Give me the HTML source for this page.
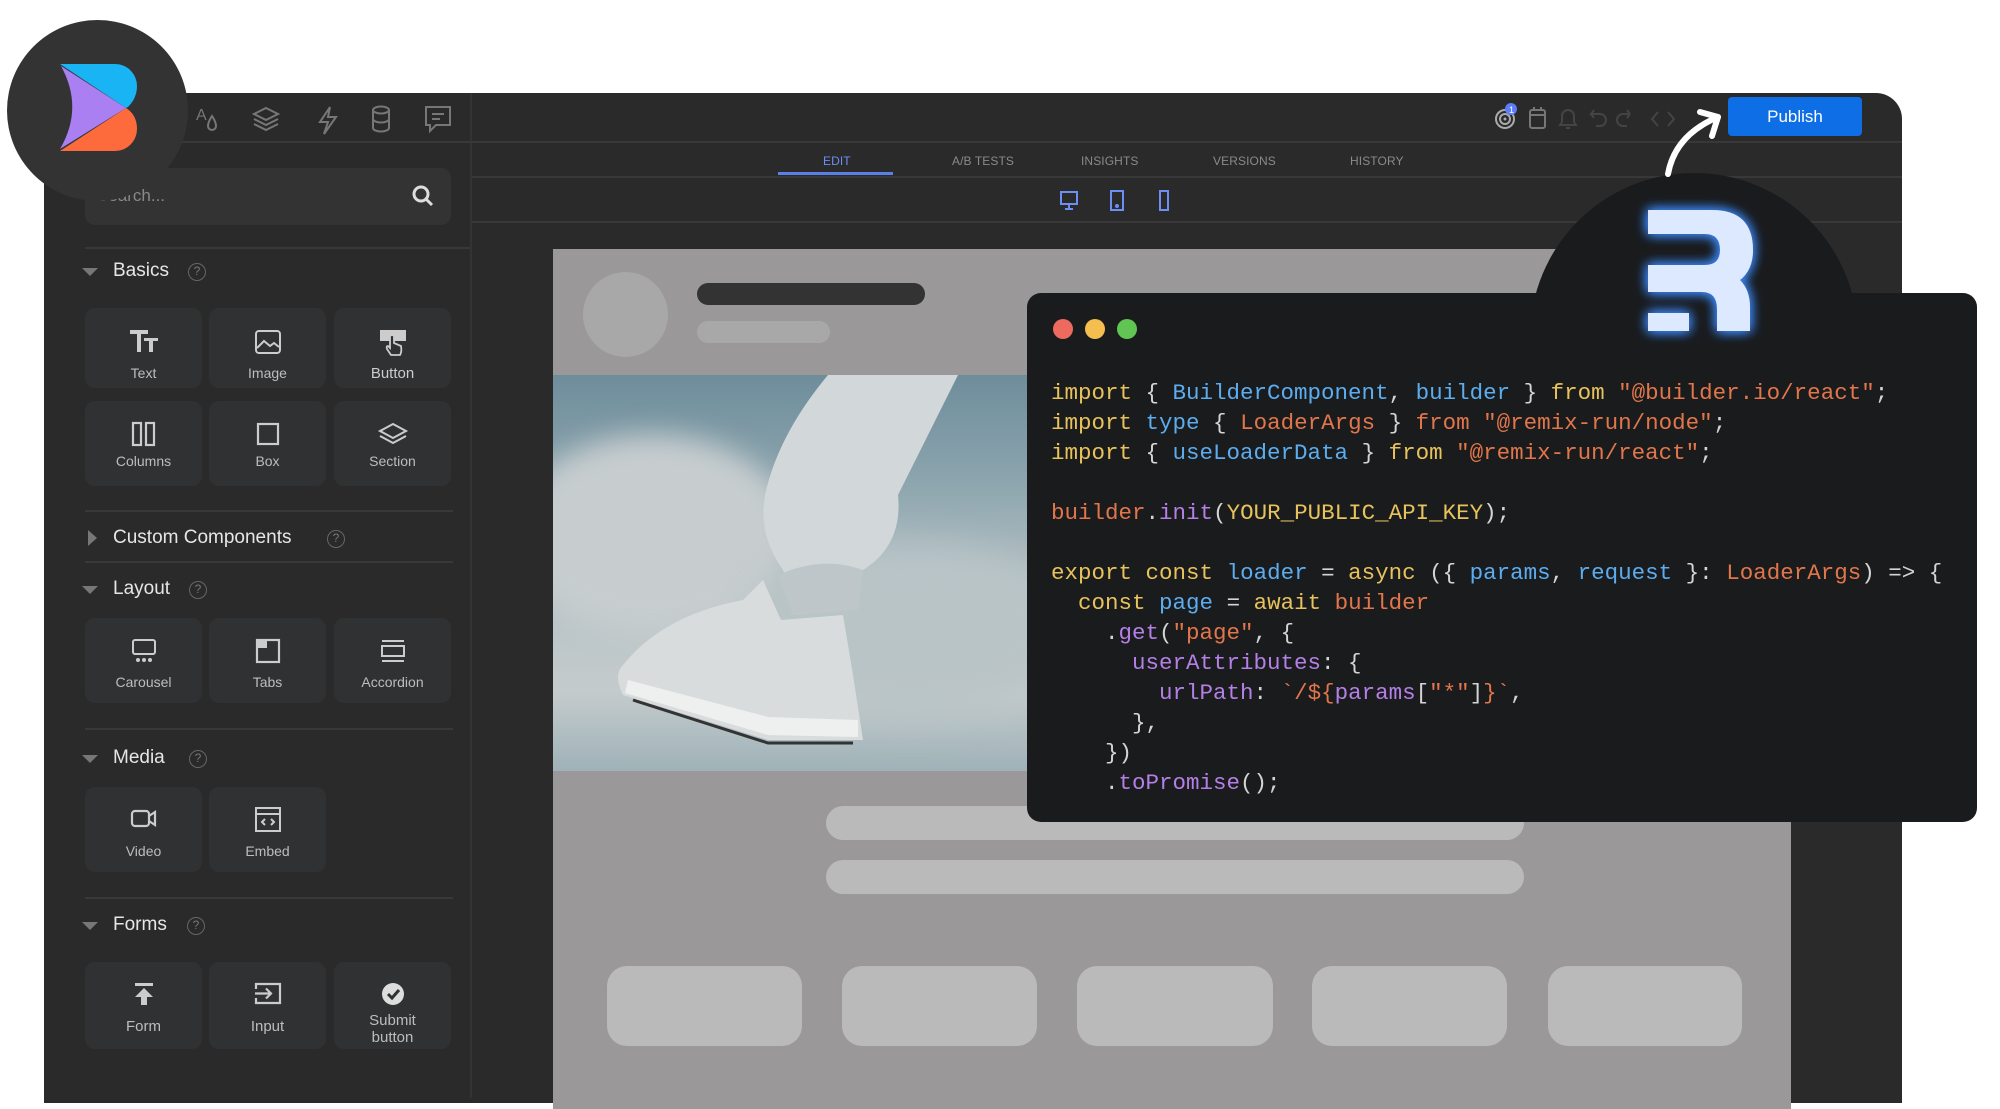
<!DOCTYPE html>
<html><head><meta charset="utf-8"><style>
*{margin:0;padding:0;box-sizing:border-box}
body{width:2000px;height:1098px;background:#fff;position:relative;overflow:hidden;font-family:"Liberation Sans",sans-serif}
.abs{position:absolute}
#panel{left:44px;top:93px;width:1858px;height:1010px;background:#2a2a2a;border-top-right-radius:26px;overflow:hidden}
.hl{position:absolute;height:2px;background:#383838}
.tile{position:absolute;width:117px;background:#303132;border-radius:10px;color:#bdbdbd;font-size:14px;text-align:center}
.tile svg{position:absolute;left:50%;transform:translateX(-50%)}
.tile span{position:absolute;left:0;right:0}
.sec{position:absolute;color:#e6e6e6;font-size:19px}
.tri{position:absolute;width:0;height:0;border-left:8px solid transparent;border-right:8px solid transparent;border-top:8px solid #777}
.q{position:absolute;width:18px;height:18px;border:1.5px solid #666;border-radius:50%;color:#777;font-size:12px;text-align:center;line-height:15px}
.tab{position:absolute;top:154px;font-size:12px;color:#8a8a8a;letter-spacing:.1px}
.code{position:absolute;left:1051px;top:378px;font-family:"Liberation Mono",monospace;font-size:22.5px;line-height:30px;color:#d4d4d4;white-space:pre}
.y{color:#e8c25a}.b{color:#5cadef}.o{color:#e2764a}.p{color:#b47fe6}
</style></head><body>

<div id="panel" class="abs"></div>
<div class="abs" style="left:470px;top:93px;width:2px;height:1005px;background:#333"></div>
<div class="hl" style="left:44px;top:141px;width:1858px"></div>
<div class="hl" style="left:472px;top:176px;width:1430px"></div>
<div class="hl" style="left:472px;top:221px;width:1430px"></div>

<svg class="abs" style="left:190px;top:100px" width="270" height="40" fill="none" stroke="#777" stroke-width="2">
<text x="6" y="20" fill="#777" stroke="none" font-size="16" font-family="Liberation Sans">A</text>
<path d="M22 16 Q18 22 18 26 A4 4 0 0 0 26 26 Q26 22 22 16Z"/>
<path d="M76 8 L88 14 L76 20 L64 14Z M64 19 L76 25 L88 19 M64 24 L76 30 L88 24"/>
<path d="M140 7 L130 22 H138 L134 34 L146 17 H138 Z"/>
<ellipse cx="191" cy="10" rx="8" ry="3.5"/><path d="M183 10 V28 A8 3.5 0 0 0 199 28 V10 M183 19 A8 3.5 0 0 0 199 19"/>
<path d="M236 7 H260 V25 H246 L240 31 V25 H236Z M242 14 H254 M242 19 H250"/>
</svg>

<div class="abs" style="left:85px;top:168px;width:366px;height:57px;background:#333;border-radius:10px"></div>
<div class="abs" style="left:97px;top:186px;color:#888;font-size:17px">Search...</div>
<svg class="abs" style="left:411px;top:184px" width="24" height="24" fill="none" stroke="#ddd" stroke-width="3"><circle cx="10" cy="10" r="7"/><path d="M15 15 L21 21"/></svg>
<div class="hl" style="left:85px;top:247px;width:385px"></div>

<div class="tri" style="left:82px;top:268px"></div>
<div class="sec" style="left:113px;top:260px">Basics</div>
<div class="q" style="left:188px;top:263px">?</div>
<div class="tile" style="left:85px;top:308px;height:80px"><svg style="top:20px" width="32" height="26"><path d="M2 2H20V6H13V24H9V6H2Z M16 10H30V13H25V24H21V13H16Z" fill="#ccc"/></svg><span style="top:57px">Text</span></div>
<div class="tile" style="left:209px;top:308px;height:80px"><svg style="top:21px" width="28" height="26" fill="none" stroke="#ccc" stroke-width="2"><rect x="2" y="2" width="24" height="22" rx="3"/><path d="M3 19 L10 12 L16 17 L20 14 L25 18"/></svg><span style="top:57px">Image</span></div>
<div class="tile" style="left:334px;top:308px;height:80px"><svg style="top:20px" width="30" height="30"><rect x="2" y="2" width="26" height="11" fill="#ccc"/><path d="M12 8 V20 L10 18 Q8 18 9 21 L13 27 H22 Q24 24 23 18 L16 15 V8 Q14 6 12 8Z" fill="#303132" stroke="#ccc" stroke-width="1.8"/></svg><span style="top:57px;color:#ccc;font-size:15px">Button</span></div>
<div class="tile" style="left:85px;top:401px;height:85px"><svg style="top:20px" width="26" height="26" fill="none" stroke="#ccc" stroke-width="2.2"><rect x="2" y="2" width="8" height="22"/><rect x="15" y="2" width="8" height="22"/></svg><span style="top:52px">Columns</span></div>
<div class="tile" style="left:209px;top:401px;height:85px"><svg style="top:21px" width="24" height="24" fill="none" stroke="#ccc" stroke-width="2.2"><rect x="2" y="2" width="20" height="20"/></svg><span style="top:52px">Box</span></div>
<div class="tile" style="left:334px;top:401px;height:85px"><svg style="top:21px" width="32" height="24" fill="none" stroke="#ccc" stroke-width="2"><path d="M16 2 L29 9 L16 16 L3 9Z M3 14 L16 21 L29 14"/></svg><span style="top:52px">Section</span></div>
<div class="hl" style="left:85px;top:510px;width:368px"></div>

<div class="abs" style="left:88px;top:530px;width:0;height:0;border-top:8px solid transparent;border-bottom:8px solid transparent;border-left:9px solid #777"></div>
<div class="sec" style="left:113px;top:527px">Custom Components</div>
<div class="q" style="left:327px;top:530px">?</div>
<div class="hl" style="left:85px;top:561px;width:368px"></div>

<div class="tri" style="left:82px;top:586px"></div>
<div class="sec" style="left:113px;top:578px">Layout</div>
<div class="q" style="left:189px;top:581px">?</div>
<div class="tile" style="left:85px;top:618px;height:85px"><svg style="top:20px" width="26" height="26" fill="none" stroke="#ccc" stroke-width="2"><rect x="2" y="2" width="22" height="14" rx="2"/><circle cx="7" cy="22" r="1" fill="#ccc"/><circle cx="13" cy="22" r="1" fill="#ccc"/><circle cx="19" cy="22" r="1" fill="#ccc"/></svg><span style="top:56px">Carousel</span></div>
<div class="tile" style="left:209px;top:618px;height:85px"><svg style="top:20px" width="26" height="26"><rect x="2" y="2" width="22" height="22" fill="none" stroke="#ccc" stroke-width="2.2"/><rect x="2" y="2" width="10" height="8" fill="#ccc"/></svg><span style="top:56px">Tabs</span></div>
<div class="tile" style="left:334px;top:618px;height:85px"><svg style="top:20px" width="26" height="26" fill="none" stroke="#ccc" stroke-width="2"><path d="M2 3H24 M2 23H24"/><rect x="2" y="8" width="22" height="10"/></svg><span style="top:56px">Accordion</span></div>
<div class="hl" style="left:85px;top:728px;width:368px"></div>

<div class="tri" style="left:82px;top:755px"></div>
<div class="sec" style="left:113px;top:747px">Media</div>
<div class="q" style="left:189px;top:750px">?</div>
<div class="tile" style="left:85px;top:787px;height:85px"><svg style="top:20px" width="28" height="24" fill="none" stroke="#ccc" stroke-width="2.2"><rect x="2" y="4" width="17" height="15" rx="3"/><path d="M19 9 L25 5 V18 L19 14"/></svg><span style="top:56px">Video</span></div>
<div class="tile" style="left:209px;top:787px;height:85px"><svg style="top:19px" width="28" height="28" fill="none" stroke="#ccc" stroke-width="2"><rect x="2" y="2" width="24" height="23"/><path d="M2 8H26 M11 13 L8 16 L11 19 M17 13 L20 16 L17 19"/></svg><span style="top:56px">Embed</span></div>
<div class="hl" style="left:85px;top:897px;width:368px"></div>

<div class="tri" style="left:82px;top:922px"></div>
<div class="sec" style="left:113px;top:914px">Forms</div>
<div class="q" style="left:187px;top:917px">?</div>
<div class="tile" style="left:85px;top:962px;height:87px"><svg style="top:19px" width="24" height="26"><rect x="3" y="2" width="18" height="3" fill="#ccc"/><path d="M12 7 L21 16 H15 V24 H9 V16 H3Z" fill="#ccc"/></svg><span style="top:56px;font-size:15px">Form</span></div>
<div class="tile" style="left:209px;top:962px;height:87px"><svg style="top:19px" width="30" height="26" fill="none" stroke="#ccc" stroke-width="2.2"><path d="M3 8 V3 H27 V22 H3 V17"/><path d="M2 12.5 H18 M13 7.5 L18 12.5 L13 17.5"/></svg><span style="top:56px;font-size:15px">Input</span></div>
<div class="tile" style="left:334px;top:962px;height:87px"><svg style="top:19px" width="26" height="26"><circle cx="13" cy="13" r="11" fill="#ddd"/><path d="M8 13 L12 17 L19 9" stroke="#303132" stroke-width="3" fill="none"/></svg><span style="top:50px;line-height:17px;font-size:15px">Submit<br>button</span></div>

<svg class="abs" style="left:1490px;top:100px" width="230" height="36" fill="none" stroke="#555" stroke-width="2">
<circle cx="15" cy="19" r="9" stroke="#aaa"/><circle cx="15" cy="19" r="5" stroke="#aaa"/><circle cx="15" cy="19" r="1.5" fill="#aaa" stroke="none"/>
<circle cx="21" cy="9" r="6" fill="#5c7cfa" stroke="none"/><text x="19" y="13" fill="#fff" stroke="none" font-size="9" font-family="Liberation Sans">1</text>
<rect x="40" y="10" width="15" height="18" rx="2" stroke="#777"/><path d="M40 15 H55 M44 7 V11 M51 7 V11" stroke="#777"/>
<path d="M70 25 H86 L84 22 V16 A6 6 0 0 0 72 16 V22Z M76 28 H80" stroke="#444"/>
<path d="M108 14 H101 L104 10 M101 14 L104 18 M101 14 H110 A6 6 0 0 1 110 26 H106" stroke="#444"/>
<path d="M140 14 H133 A6 6 0 0 0 133 26 H137 M140 14 L137 10 M140 14 L137 18" stroke="#444"/>
<path d="M168 12 L162 19 L168 26 M178 12 L184 19 L178 26" stroke="#444"/>
</svg>
<div class="abs" style="left:1728px;top:97px;width:134px;height:39px;background:#0e6ee6;border-radius:4px;color:#fff;font-size:17px;text-align:center;line-height:39px">Publish</div>

<div class="tab" style="left:823px;color:#6c8ef5">EDIT</div>
<div class="abs" style="left:778px;top:172px;width:115px;height:3px;background:#5b7fe8"></div>
<div class="tab" style="left:952px">A/B TESTS</div>
<div class="tab" style="left:1081px">INSIGHTS</div>
<div class="tab" style="left:1213px">VERSIONS</div>
<div class="tab" style="left:1350px">HISTORY</div>
<svg class="abs" style="left:1050px;top:188px" width="130" height="26" fill="none" stroke="#6c8ef5" stroke-width="2">
<rect x="11" y="4" width="16" height="12"/><path d="M19 16 V20 M15 21 H23"/>
<rect x="61" y="3" width="12" height="19"/><circle cx="67" cy="18" r="1" fill="#6c8ef5"/>
<rect x="110" y="3" width="8" height="19"/>
</svg>

<div class="abs" style="left:553px;top:249px;width:1238px;height:860px;background:#9a9899"></div>
<div class="abs" style="left:583px;top:272px;width:85px;height:85px;border-radius:50%;background:#a9a8a9"></div>
<div class="abs" style="left:697px;top:283px;width:228px;height:22px;border-radius:11px;background:#333"></div>
<div class="abs" style="left:697px;top:321px;width:133px;height:22px;border-radius:11px;background:#a9a8a9"></div>
<div class="abs" style="left:553px;top:375px;width:474px;height:396px;overflow:hidden;background:linear-gradient(180deg,#6e8d9b 0%,#8aa3ad 25%,#b7c3c6 55%,#c4cbcc 80%,#9fb2b8 100%)">
<div class="abs" style="left:-40px;top:60px;width:280px;height:200px;border-radius:50%;background:#c7cdcf;filter:blur(14px)"></div>
<div class="abs" style="left:200px;top:170px;width:320px;height:170px;border-radius:50%;background:#b9c4c7;filter:blur(18px)"></div>
<svg class="abs" style="left:0;top:0" width="474" height="396">
<path d="M275 0 H405 L345 120 Q350 170 310 195 L305 230 L245 240 L230 195 Q205 160 212 120 Q225 60 275 0Z" fill="#d2d7da"/>
<path d="M225 200 Q270 180 310 195 L305 235 L240 240Z" fill="#bfc6c9"/>
<path d="M70 290 Q110 240 190 225 L210 205 L228 245 L290 240 L300 300 L310 365 L215 365 L70 320 Q60 300 70 290Z" fill="#d9dcdd"/>
<path d="M72 318 L215 360 L305 362 L305 345 L215 342 L75 305Z" fill="#eef0f0"/>
<path d="M80 325 L215 368 L300 368" stroke="#333" stroke-width="3" fill="none"/>
</svg>
</div>
<div class="abs" style="left:826px;top:806px;width:698px;height:34px;border-radius:17px;background:#bababa"></div>
<div class="abs" style="left:826px;top:860px;width:698px;height:34px;border-radius:17px;background:#bababa"></div>
<div class="abs" style="left:607px;top:966px;width:195px;height:80px;border-radius:20px;background:#bababa"></div>
<div class="abs" style="left:842px;top:966px;width:195px;height:80px;border-radius:20px;background:#bababa"></div>
<div class="abs" style="left:1077px;top:966px;width:196px;height:80px;border-radius:20px;background:#bababa"></div>
<div class="abs" style="left:1312px;top:966px;width:195px;height:80px;border-radius:20px;background:#bababa"></div>
<div class="abs" style="left:1548px;top:966px;width:194px;height:80px;border-radius:20px;background:#bababa"></div>

<div class="abs" style="left:1530px;top:173px;width:328px;height:328px;border-radius:50%;background:#1a1b1d"></div>

<div class="abs" style="left:1027px;top:293px;width:950px;height:529px;background:#1a1b1d;border-radius:14px"></div>
<div class="abs" style="left:1053px;top:319px;width:20px;height:20px;border-radius:50%;background:#ec6a5e"></div>
<div class="abs" style="left:1085px;top:319px;width:20px;height:20px;border-radius:50%;background:#f4bf4f"></div>
<div class="abs" style="left:1117px;top:319px;width:20px;height:20px;border-radius:50%;background:#61c554"></div>
<div class="code"><span class="y">import</span> { <span class="b">BuilderComponent</span>, <span class="b">builder</span> } <span class="y">from</span> <span class="o">"@builder.io/react"</span>;
<span class="y">import</span> <span class="b">type</span> { <span class="o">LoaderArgs</span> } <span class="o">from</span> <span class="o">"@remix-run/node"</span>;
<span class="y">import</span> { <span class="b">useLoaderData</span> } <span class="y">from</span> <span class="o">"@remix-run/react"</span>;

<span class="o">builder</span>.<span class="p">init</span>(<span class="y">YOUR_PUBLIC_API_KEY</span>);

<span class="y">export</span> <span class="y">const</span> <span class="b">loader</span> = <span class="y">async</span> ({ <span class="b">params</span>, <span class="b">request</span> }: <span class="o">LoaderArgs</span>) =&gt; {
  <span class="y">const</span> <span class="b">page</span> = <span class="y">await</span> <span class="o">builder</span>
    .<span class="p">get</span>(<span class="o">"page"</span>, {
      <span class="p">userAttributes</span>: {
        <span class="p">urlPath</span>: <span class="o">`/${</span><span class="p">params</span>[<span class="o">"*"</span>]<span class="o">}`</span>,
      },
    })
    .<span class="p">toPromise</span>();</div>

<svg class="abs" style="left:1600px;top:170px;overflow:visible" width="200" height="200">
<defs><filter id="g" x="-50%" y="-50%" width="200%" height="200%"><feGaussianBlur in="SourceAlpha" stdDeviation="6" result="b"/><feFlood flood-color="#3d8bff"/><feComposite in2="b" operator="in"/><feMerge><feMergeNode/><feMergeNode/><feMergeNode in="SourceGraphic"/></feMerge></filter></defs>
<g filter="url(#g)" fill="#dce9ff" transform="translate(-1600,-170)">
<path d="M1648 210 H1712 Q1753 210 1753 250 Q1753 270 1740 280 Q1750 290 1750 307 V331 H1717 V309 Q1717 292 1702 292 H1648 V265 H1705 Q1720 265 1720 250 Q1720 234 1705 234 H1648 Z"/>
<rect x="1648" y="313" width="41" height="18"/>
</g></svg>

<svg class="abs" style="left:1650px;top:100px" width="90" height="80" fill="none" stroke="#fff" stroke-width="6" stroke-linecap="round" stroke-linejoin="round">
<path d="M18 74 Q25 35 68 17"/><path d="M50 12 L68 17 L62 36"/>
</svg>

<div class="abs" style="left:7px;top:20px;width:181px;height:181px;border-radius:50%;background:#333"></div>
<svg class="abs" style="left:0;top:0" width="200" height="200">
<path d="M60 64 H115 A22 22 0 0 1 137 86 Q137 98 128 107 L126 108 Z" fill="#18b4f4"/>
<path d="M60 151 L126 108 Q137 115 137 129 A22 22 0 0 1 115 151 Z" fill="#fd6b3c"/>
<path d="M61 66 L126 108 L60 149 Q84 108 61 66 Z" fill="#a97ff2"/>
</svg>
</body></html>
